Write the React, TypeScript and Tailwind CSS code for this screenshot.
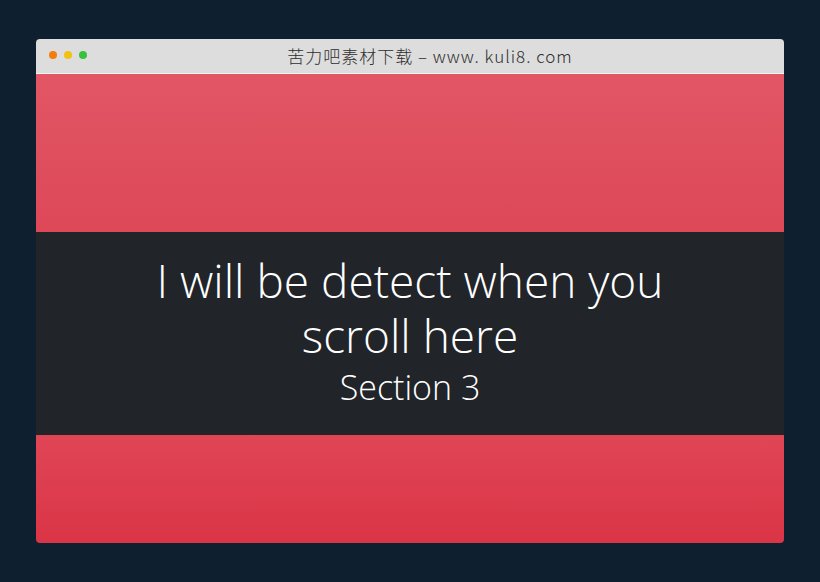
export default function App() {
  return (
    <div className="flex h-[582px] w-[820px] items-start justify-center bg-[#0e1f2f] pt-[39px]">
      <div className="flex h-[504px] w-[748px] flex-col overflow-hidden rounded-[4px]">
        <div className="relative flex h-[35px] shrink-0 items-center justify-center border-b border-[#f4f4f4] bg-[#dddddd]">
          <div className="absolute left-[13px] top-[12px] flex gap-[7px]">
            <span className="h-[8px] w-[8px] rounded-full bg-[#f57d0a]" />
            <span className="h-[8px] w-[8px] rounded-full bg-[#f0c313]" />
            <span className="h-[8px] w-[8px] rounded-full bg-[#36c23c]" />
          </div>
          <span
            className="ml-[40px] text-[17px] font-light tracking-[1px] text-[#2e2e2e]"
            style={{ fontFamily: '"Noto Sans CJK SC", "Noto Sans", sans-serif' }}
          >
            苦力吧素材下载 – www. kuli8. com
          </span>
        </div>
        <section className="h-[158px] shrink-0 bg-gradient-to-b from-[#e25665] to-[#dd4857]" />
        <section
          className="flex h-[203px] shrink-0 flex-col items-center justify-center bg-[#212429] pb-[4px] text-center text-white"
          style={{ fontFamily: '"Open Sans", sans-serif' }}
        >
          <h1 className="w-[540px] text-[46px] font-light leading-[55px]">I will be detect when you scroll here</h1>
          <p className="text-[34px] font-light leading-[48px]">Section 3</p>
        </section>
        <section className="flex-1 bg-gradient-to-b from-[#e04556] to-[#da3547]" />
      </div>
    </div>
  )
}
